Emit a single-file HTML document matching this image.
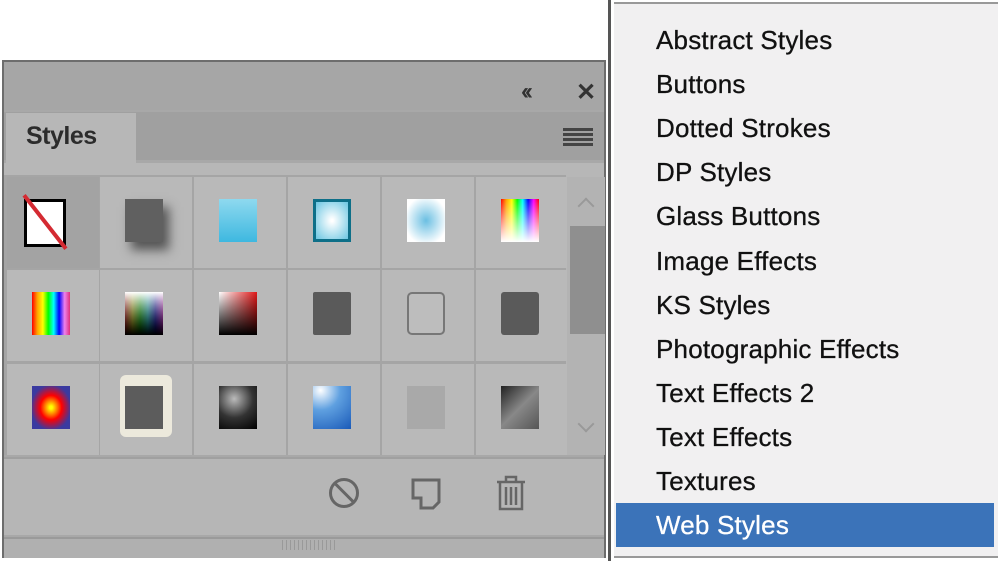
<!DOCTYPE html>
<html><head><style>
*{margin:0;padding:0;box-sizing:border-box}
body{width:1000px;height:561px;background:#fff;position:relative;overflow:hidden;font-family:"Liberation Sans",sans-serif}
.a{position:absolute}
.cell{position:absolute;width:92px;height:91px;background:#b9b9b9}
.sw{position:absolute;left:25px;top:22px;width:38px;height:43px}
.menu div{position:absolute;left:656px;font-size:26px;color:#111;letter-spacing:0.2px;-webkit-text-stroke:0.3px #111}
</style></head><body>
<div class="a" style="left:2px;top:60px;width:604px;height:498px;background:#a8a8a8;border:2px solid #6d6d6d;border-bottom:none"></div>
<div class="a" style="left:4px;top:62px;width:600px;height:48px;background:#a6a6a6"></div>
<div class="a" style="left:521px;top:78px;font-size:24px;font-weight:bold;color:#333;letter-spacing:-4px">‹‹</div>
<div class="a" style="left:576px;top:78px;font-size:24px;font-weight:bold;color:#333">✕</div>
<div class="a" style="left:4px;top:112px;width:600px;height:48px;background:#a0a0a0"></div>
<div class="a" style="left:6px;top:113px;width:130px;height:50px;background:#b7b7b7"></div>
<div class="a" style="left:26px;top:122px;font-size:25px;font-weight:bold;color:#2c2c2c;letter-spacing:-0.5px">Styles</div>
<div class="a" style="left:563px;top:128px;width:30px;height:3px;background:#444;box-shadow:0 5px 0 #444,0 10px 0 #444,0 15px 0 #444"></div>
<div class="a" style="left:4px;top:163px;width:600px;height:292px;background:#b7b7b7"></div>
<div class="a" style="left:4px;top:175px;width:562px;height:280px;background:#a5a5a5"></div>
<div class="cell" style="left:7px;top:177px;background:#a3a3a3"><div class="a" style="left:17px;top:22px;width:42px;height:48px;background:#fff;border:3px solid #000"></div><div class="a" style="left:4px;top:43px;width:68px;height:4px;background:#d42a32;transform:rotate(52deg)"></div></div>
<div class="cell" style="left:100px;top:177px"><div class="sw" style="background:#606060;box-shadow:6px 8px 10px #555"></div></div>
<div class="cell" style="left:194px;top:177px"><div class="sw" style="background:linear-gradient(#8ed9ef,#3eb8e0)"></div></div>
<div class="cell" style="left:288px;top:177px"><div class="sw" style="background:radial-gradient(#fff 5%,#6bc6e2);border:3px solid #0e6f88"></div></div>
<div class="cell" style="left:382px;top:177px"><div class="sw" style="background:radial-gradient(#6bbfe2,#fff 80%)"></div></div>
<div class="cell" style="left:476px;top:177px"><div class="sw" style="background:linear-gradient(transparent,#fff),linear-gradient(90deg,red,orange,yellow,lime,cyan,blue,magenta,red)"></div></div>
<div class="cell" style="left:7px;top:270px"><div class="sw" style="background:linear-gradient(90deg,red,orange,yellow,lime,cyan,blue,violet,#e0307a)"></div></div>
<div class="cell" style="left:100px;top:270px"><div class="sw" style="background:linear-gradient(#fff0,#000),linear-gradient(#fff,#fff0),linear-gradient(90deg,red,yellow,lime,cyan,blue,magenta)"></div></div>
<div class="cell" style="left:194px;top:270px"><div class="sw" style="background:linear-gradient(transparent,#000),linear-gradient(90deg,#fff,#e01818)"></div></div>
<div class="cell" style="left:288px;top:270px"><div class="sw" style="background:#5a5a5a;border-radius:2px"></div></div>
<div class="cell" style="left:382px;top:270px"><div class="sw" style="background:#bdbdbd;border:2px solid #777;border-radius:5px"></div></div>
<div class="cell" style="left:476px;top:270px"><div class="sw" style="background:#5a5a5a;border-radius:3px"></div></div>
<div class="cell" style="left:7px;top:364px"><div class="sw" style="background:radial-gradient(#ff0 5%,#f00 40%,#3a3aa0 75%)"></div></div>
<div class="cell" style="left:100px;top:364px"><div class="a" style="left:20px;top:11px;width:52px;height:62px;background:#ece9dc;border-radius:6px"></div><div class="sw" style="background:#5c5c5c"></div></div>
<div class="cell" style="left:194px;top:364px"><div class="sw" style="background:radial-gradient(circle at 40% 30%,#bbb,#333 50%,#000)"></div></div>
<div class="cell" style="left:288px;top:364px"><div class="sw" style="background:radial-gradient(circle at 20% 10%,#fff,#5fa0e0 40%,#1a5ab8)"></div></div>
<div class="cell" style="left:382px;top:364px"><div class="sw" style="background:#a9a9a9"></div></div>
<div class="cell" style="left:476px;top:364px"><div class="sw" style="background:linear-gradient(135deg,#222,#888 50%,#555)"></div></div>
<div class="a" style="left:567px;top:177px;width:38px;height:278px;background:#b3b3b3"></div>
<div class="a" style="left:570px;top:226px;width:35px;height:108px;background:#8f8f8f"></div>
<div class="a" style="left:580px;top:200px;width:12px;height:12px;border-left:2px solid #999;border-top:2px solid #999;transform:rotate(45deg)"></div>
<div class="a" style="left:580px;top:418px;width:12px;height:12px;border-right:2px solid #999;border-bottom:2px solid #999;transform:rotate(45deg)"></div>
<div class="a" style="left:4px;top:457px;width:600px;height:78px;background:#b6b6b6;border-top:2px solid #a0a0a0"></div>
<div class="a" style="left:329px;top:478px;width:30px;height:30px;border:3px solid #666;border-radius:50%"></div>
<div class="a" style="left:330px;top:491px;width:28px;height:3px;background:#666;transform:rotate(45deg)"></div>
<svg class="a" style="left:410px;top:476px" width="34" height="34"><path d="M3 4h26v22l-6 6h-12v-10h-8z" fill="none" stroke="#666" stroke-width="3"/></svg>
<svg class="a" style="left:494px;top:474px" width="34" height="38"><path d="M3 8h28M12 8V3h10v5M6 8v27h22V8M12 13v18M17 13v18M22 13v18" fill="none" stroke="#666" stroke-width="2.5"/></svg>
<div class="a" style="left:4px;top:537px;width:600px;height:21px;background:#b0b0b0;border-top:2px solid #9a9a9a"></div>
<div class="a" style="left:282px;top:540px;width:54px;height:10px;background:repeating-linear-gradient(90deg,#999 0 1px,transparent 1px 4px)"></div>
<div class="a" style="left:608px;top:0;width:3px;height:561px;background:#555"></div>
<div class="a" style="left:614px;top:2px;width:384px;height:556px;background:#f1f0f1;border-top:2px solid #999;border-bottom:2px solid #999"></div>
<div class="a" style="left:616px;top:503px;width:378px;height:44px;background:#3b73b9"></div>
<div class="menu">
<div style="top:25px">Abstract Styles</div>
<div style="top:69px">Buttons</div>
<div style="top:113px">Dotted Strokes</div>
<div style="top:157px">DP Styles</div>
<div style="top:201px">Glass Buttons</div>
<div style="top:246px">Image Effects</div>
<div style="top:290px">KS Styles</div>
<div style="top:334px">Photographic Effects</div>
<div style="top:378px">Text Effects 2</div>
<div style="top:422px">Text Effects</div>
<div style="top:466px">Textures</div>
<div style="top:510px;color:#fff;-webkit-text-stroke:0.3px #fff">Web Styles</div>
</div>
</body></html>
